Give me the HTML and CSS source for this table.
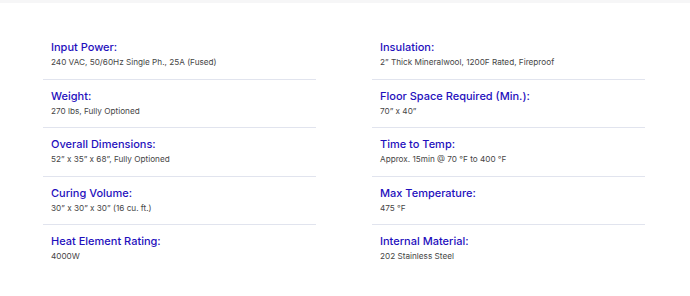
FILE: index.html
```html
<!DOCTYPE html>
<html>
<head>
<meta charset="utf-8">
<link rel="stylesheet" href="styles.css">
</head>
<body>
<div class="band"></div>
<div class="specs">
  <div class="col">
    <div class="row"><div class="label">Input Power:</div><div class="value">240 VAC, 50/60Hz Single Ph., 25A (Fused)</div></div>
    <div class="row"><div class="label">Weight:</div><div class="value">270 lbs, Fully Optioned</div></div>
    <div class="row"><div class="label">Overall Dimensions:</div><div class="value">52” x 35” x 68”, Fully Optioned</div></div>
    <div class="row"><div class="label">Curing Volume:</div><div class="value">30” x 30” x 30” (16 cu. ft.)</div></div>
    <div class="row"><div class="label">Heat Element Rating:</div><div class="value">4000W</div></div>
  </div>
  <div class="col">
    <div class="row"><div class="label">Insulation:</div><div class="value">2” Thick Mineralwool, 1200F Rated, Fireproof</div></div>
    <div class="row"><div class="label">Floor Space Required (Min.):</div><div class="value">70” x 40”</div></div>
    <div class="row"><div class="label">Time to Temp:</div><div class="value">Approx. 15min @ 70 °F to 400 °F</div></div>
    <div class="row"><div class="label">Max Temperature:</div><div class="value">475 °F</div></div>
    <div class="row"><div class="label">Internal Material:</div><div class="value">202 Stainless Steel</div></div>
  </div>
</div>
</body>
</html>
```
FILE: styles.css
```css
html, body {
  margin: 0;
  padding: 0;
  background: #ffffff;
  font-family: Inter, "Noto Sans", sans-serif;
}
.band {
  height: 3px;
  background: #f6f6f7;
}
.specs {
  width: 602px;
  margin: 0 auto;
  padding-top: 28px;
  display: grid;
  grid-template-columns: 273px 273px;
  column-gap: 56px;
  transform: translateX(-1px);
}
.row {
  padding: 8px 8px 10.6px 8px;
  border-bottom: 1px solid #e1e4ee;
}
.row:last-child {
  border-bottom: none;
}
.label {
  font-size: 11px;
  font-weight: 500;
  line-height: 16px;
  color: #1f10bd;
  margin-bottom: 1px;
}
.value {
  font-size: 8.2px;
  line-height: 12px;
  color: #464646;
}
```
